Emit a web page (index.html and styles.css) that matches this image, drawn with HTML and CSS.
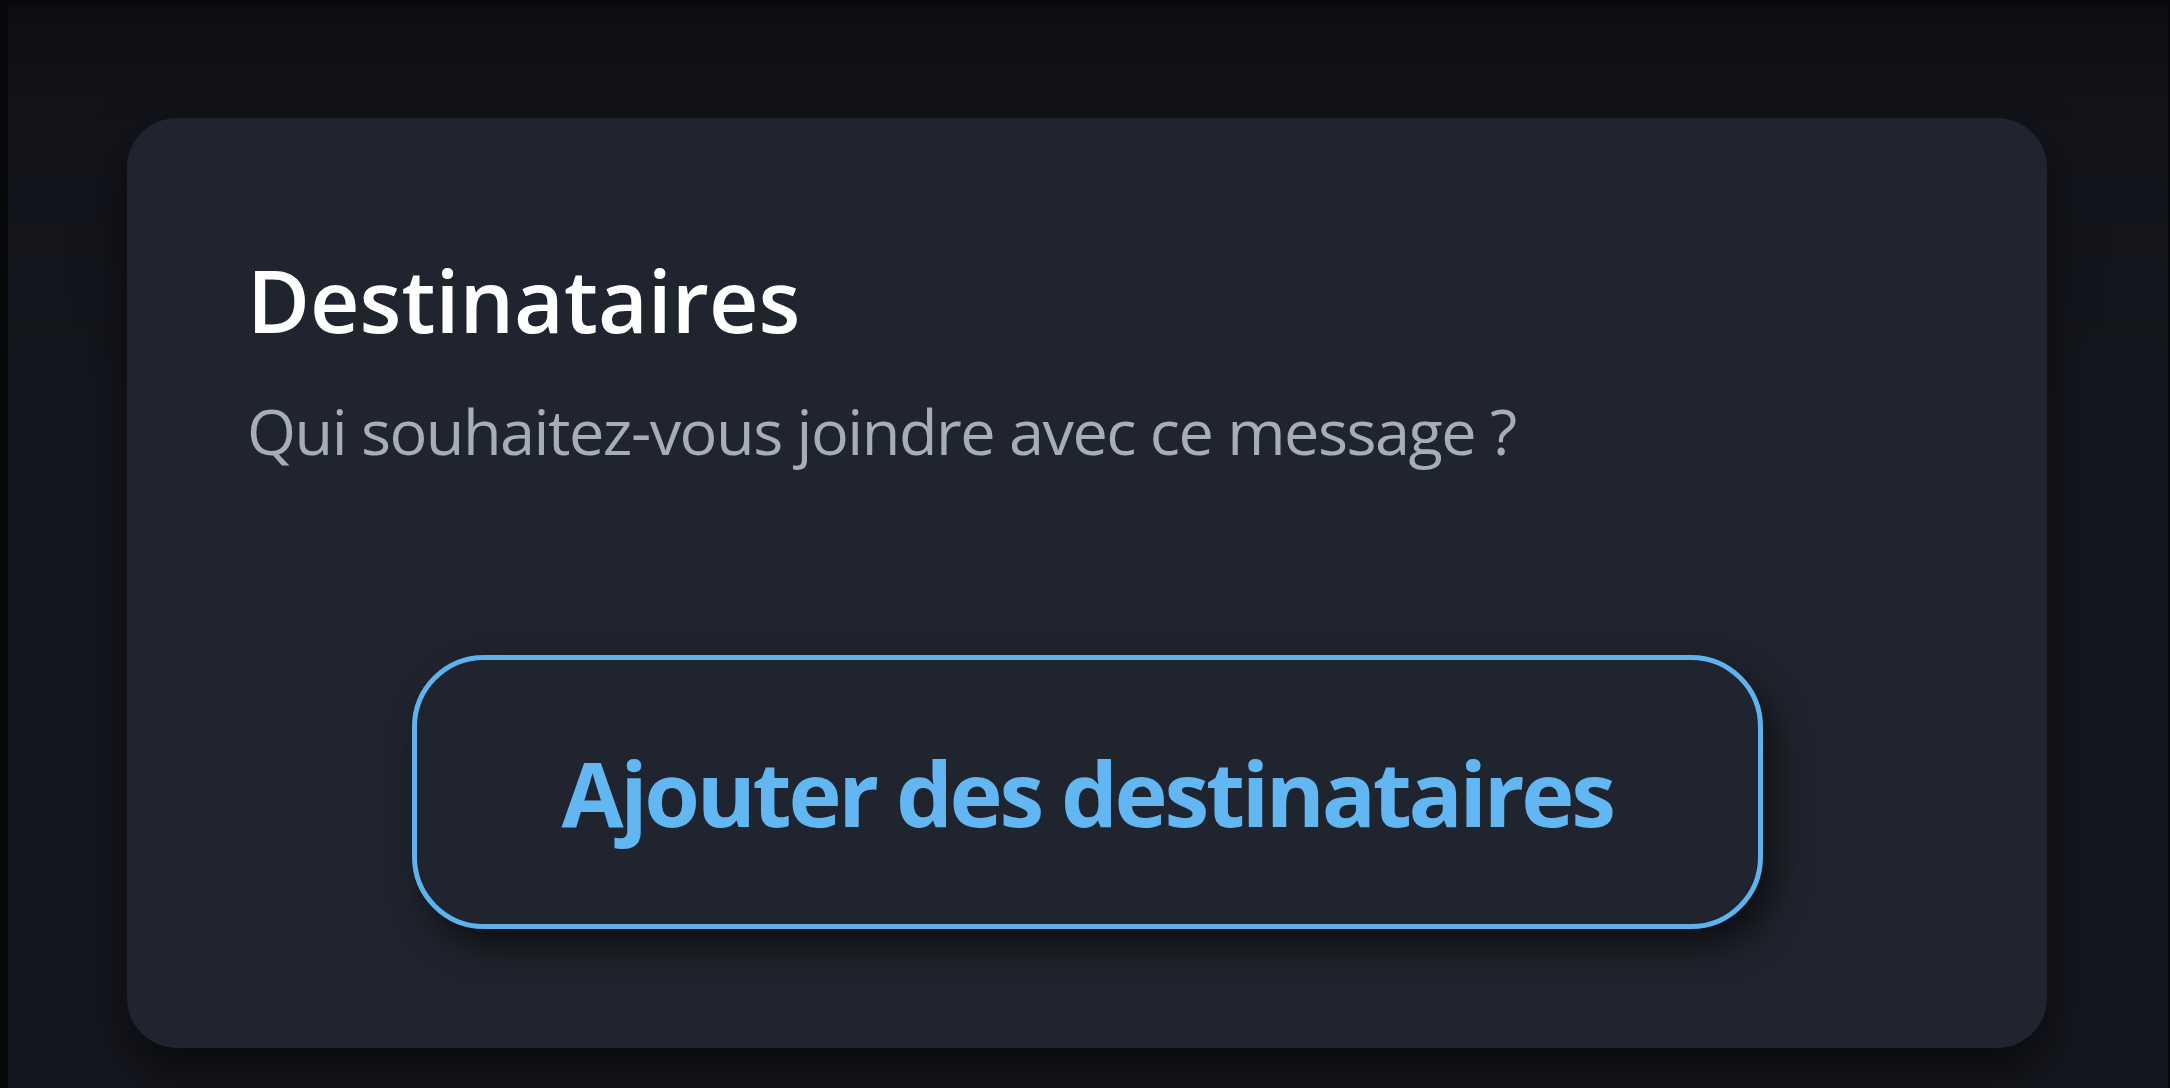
FILE: index.html
```html
<!DOCTYPE html>
<html lang="fr">
<head>
  <meta charset="UTF-8" />
  <title>Destinataires</title>
  <link rel="stylesheet" href="styles.css">
</head>
<body>
  <div class="screen">
    <section class="card">
      <h1 class="card-title">Destinataires</h1>
      <p class="card-subtitle">Qui souhaitez-vous joindre avec ce message ?</p>
      <div class="card-actions">
        <button class="add-btn">Ajouter des destinataires</button>
      </div>
    </section>
  </div>
</body>
</html>
```

FILE: styles.css
```css
html, body {
  height: 100%;
}

body {
  margin: 0;
  padding: 7px 2px 0 8px;
  box-sizing: border-box;
  background-color: #08090b;
  font-family: "Open Sans", "Noto Sans", sans-serif;
  overflow: hidden;
}

.screen {
  height: 100%;
  padding: 111px 0 0 119px;
  box-sizing: border-box;
  background: linear-gradient(180deg, #0d0e12 0%, #12141a 10%, #15171e 40%, #15171e 100%);
}

.card {
  width: 1920px;
  height: 930px;
  box-sizing: border-box;
  padding: 130px 120px 0 120px;
  background-color: #20242e;
  border-radius: 50px;
  box-shadow: 0 24px 50px rgba(0, 0, 0, 0.55);
  display: flex;
  flex-direction: column;
}

.card-title {
  margin: 0;
  color: #ffffff;
  font-size: 86px;
  font-weight: 600;
  line-height: 1.2;
  letter-spacing: 0;
}

.card-subtitle {
  margin: 42px 0 0 0;
  color: #a6adb7;
  font-size: 63px;
  font-weight: 400;
  line-height: 1.2;
  letter-spacing: -1.5px;
}

.card-actions {
  display: flex;
  justify-content: center;
  margin-top: 186px;
}

.add-btn {
  width: 1351px;
  height: 274px;
  border: 5px solid #5eb3ee;
  border-radius: 72px;
  background-color: #20242e;
  color: #62b6f1;
  font-family: "Open Sans", "Noto Sans", sans-serif;
  font-size: 90px;
  font-weight: 700;
  letter-spacing: -3.3px;
  box-shadow: 12px 18px 36px rgba(0, 0, 0, 0.6);
  cursor: pointer;
}
```
